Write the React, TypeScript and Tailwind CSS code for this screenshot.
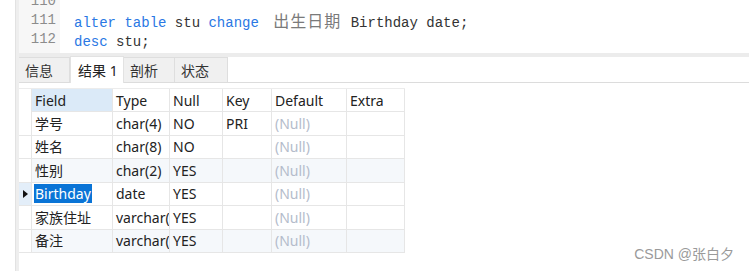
import React from 'react'

const kw = 'text-[#2a78e4]'

const rows = [
  { field: '学号', type: 'char(4)', nul: 'NO', key: 'PRI', light: false },
  { field: '姓名', type: 'char(8)', nul: 'NO', key: '', light: false },
  { field: '性别', type: 'char(2)', nul: 'YES', key: '', light: true },
  { field: 'Birthday', type: 'date', nul: 'YES', key: '', light: false, current: true },
  { field: '家族住址', type: 'varchar(', nul: 'YES', key: '', light: false },
  { field: '备注', type: 'varchar(', nul: 'YES', key: '', light: true },
]

const tabs = [
  { label: '信息', w: 'w-[51px]', active: false },
  { label: '结果 1', w: 'w-[54px]', active: true },
  { label: '剖析', w: 'w-[51px]', active: false },
  { label: '状态', w: 'w-[53px]', active: false },
]

const cell = 'border-r border-b border-[#e6e6e6] pl-[3px] overflow-hidden whitespace-nowrap flex items-center'

export default function App() {
  const renderedTabs = tabs.map(({ label, w, active }, index) => {
    return (
      <div
        key={index}
        className={
          active
            ? `${w} h-[27px] -mb-px bg-white border-t border-x border-[#e2e2e2] pl-[7px] flex items-center text-[#222]`
            : `${w} h-[25px] bg-[#f0f0f0] border-t border-r border-[#dedede] pl-[6px] flex items-center text-[#333]`
        }
      >
        {label}
      </div>
    )
  })

  const renderedRows = rows.map((r, index) => {
    const bg = r.light ? 'bg-[#f5f8fb]' : 'bg-white'
    return (
      <div key={index} className={`flex w-fit h-[23.5px] ${bg}`}>
        <div
          className={`w-[13px] border-r border-b border-[#e6e6e6] flex items-center justify-center ${
            r.current ? 'bg-[#e3eef9]' : 'bg-white'
          }`}
        >
          {r.current && (
            <svg width="5" height="8" viewBox="0 0 5 8">
              <path d="M0 0 L5 4 L0 8 Z" fill="#111" />
            </svg>
          )}
        </div>
        <div className={`${cell} w-[81px]`}>
          {r.current ? (
            <span className="bg-[#0a74d6] text-white px-px -ml-px leading-[19px]">{r.field}</span>
          ) : (
            r.field
          )}
        </div>
        <div className={`${cell} w-[57px]`}>{r.type}</div>
        <div className={`${cell} w-[53px]`}>{r.nul}</div>
        <div className={`${cell} w-[49px]`}>{r.key}</div>
        <div className={`${cell} w-[75px] text-[#b4bccb]`}>(Null)</div>
        <div className={`${cell} w-[58px]`}></div>
      </div>
    )
  })

  return (
    <div className="relative w-[749px] h-[271px] bg-white flex overflow-hidden font-['Noto_Sans','Noto_Sans_CJK_SC',sans-serif] text-[14px] text-[#222]">
      <div className="w-[15px] bg-white" />
      <div className="w-[4px] bg-[#eeeeee] border-l border-[#e2e2e2]" />
      <div className="flex-1 flex flex-col">
        <div className="h-[53px] overflow-hidden flex font-['Liberation_Mono','Noto_Sans_CJK_SC',monospace] text-[14px]">
          <div className="w-[41px] bg-[#f7f7f7] text-right pr-[4px] text-[#8c8c8c]">
            <div className="-mt-[8px] leading-[19px]">
              <div>110</div>
              <div>111</div>
              <div>112</div>
            </div>
          </div>
          <div className="flex-1 pl-[14px] whitespace-pre text-[#333]">
            <div className="-mt-[8px] leading-[19px]">
              <div>&nbsp;</div>
              <div>
                <span className={kw}>alter</span> <span className={kw}>table</span> stu{' '}
                <span className={kw}>change</span>{' '}
                <span className="ml-[6px] mr-px text-[#7a7a7a] text-[16px] font-['Noto_Sans_CJK_SC',sans-serif] tracking-[1px]">出生日期</span>{' '}
                Birthday date;
              </div>
              <div>
                <span className={kw}>desc</span> stu;
              </div>
            </div>
          </div>
        </div>
        <div className="h-[4px] bg-[#ececec]" />
        <div className="h-[26px] flex items-end border-b border-[#dcdcdc]">{renderedTabs}</div>
        <div className="pt-[5px]">
          <div className="flex w-fit h-[24px] border-t border-[#ececec]">
            <div className="w-[13px] border-r border-[#e6e6e6]" />
            <div className={`${cell} w-[81px] bg-[#dbeaf8]`}>Field</div>
            <div className={`${cell} w-[57px]`}>Type</div>
            <div className={`${cell} w-[53px]`}>Null</div>
            <div className={`${cell} w-[49px]`}>Key</div>
            <div className={`${cell} w-[75px]`}>Default</div>
            <div className={`${cell} w-[58px]`}>Extra</div>
          </div>
          {renderedRows}
        </div>
      </div>
      <div className="absolute right-[15px] bottom-[6px] text-[14px] text-[#9a9a9a] font-['Liberation_Sans','Noto_Sans_CJK_SC',sans-serif]">
        CSDN @张白夕
      </div>
    </div>
  )
}
